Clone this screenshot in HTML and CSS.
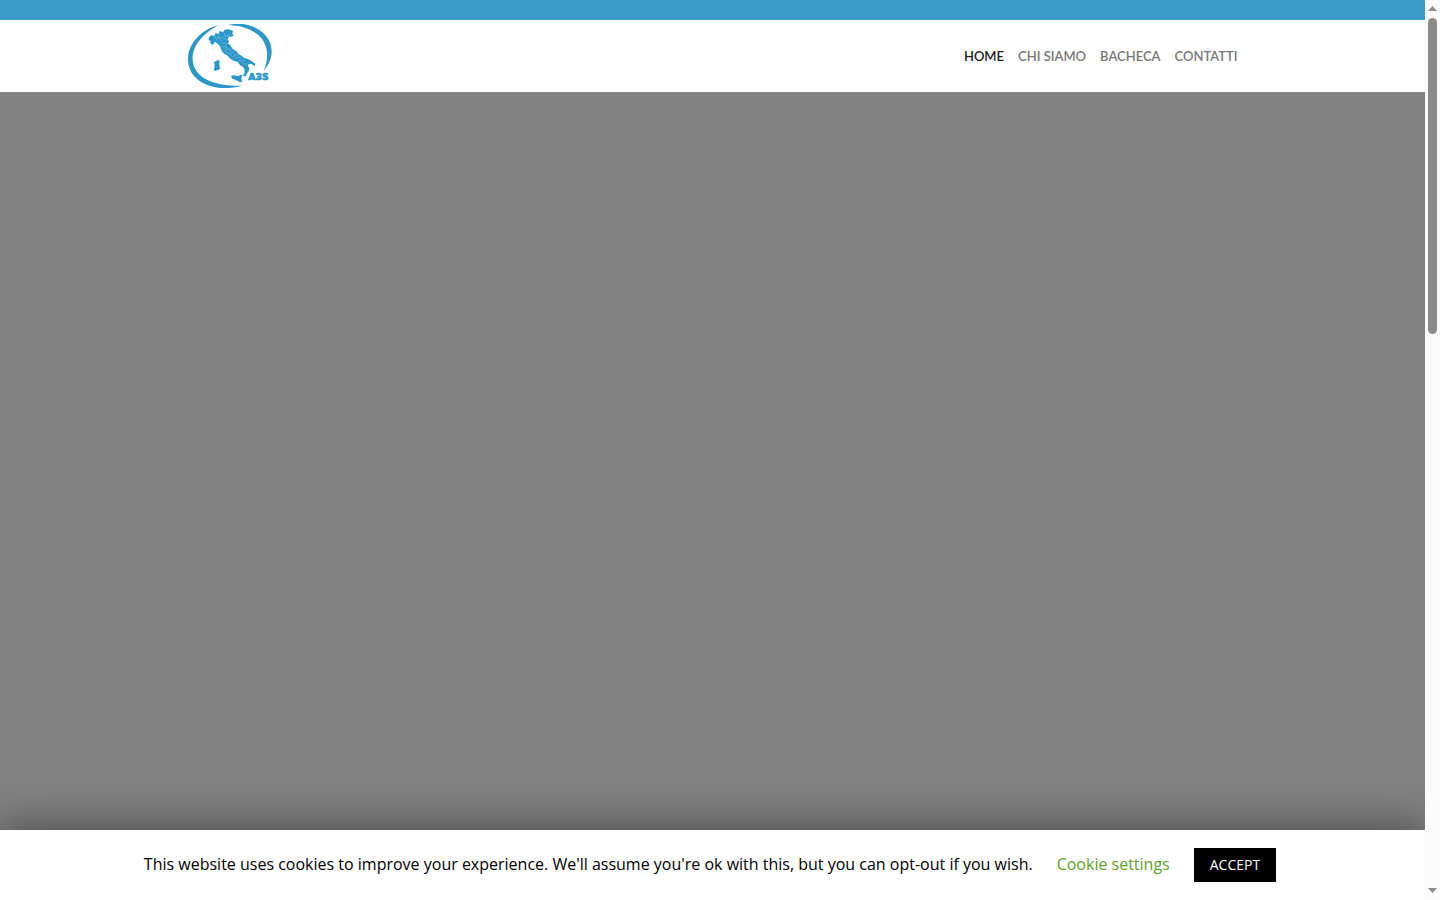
FILE: index.html
```html
<!DOCTYPE html>
<html lang="it">
<head>
<meta charset="utf-8">
<meta name="viewport" content="width=device-width, initial-scale=1">
<title>A3S</title>
<link rel="stylesheet" href="styles.css">
</head>
<body>
<div class="page">
  <div class="topbar"></div>
  <header class="header">
    <div class="header-inner">
      <a class="logo" href="#" aria-label="A3S">
        <svg width="84" height="64" viewBox="24 27 252 192" aria-hidden="true">
          <g fill="#2b96c8">
            <path d="M118 29C66 42 23 84 24 134C25 186 72 218 132 219C153 219 171 217 187 212C166 213 149 212 132 209C80 202 40 176 38 134C36 92 70 54 118 29Z"/>
            <path d="M143 30C206 14 275 51 275 109C275 131 266 150 251 167C259 148 263 130 261 111C257 60 205 31 143 30Z"/>
            <path d="M86 68L94 60L102 63L107 55L115 57L119 48L129 51L134 44L145 43L159 47L157 56L161 61L154 66L148 64L143 71L147 79L144 85L151 91L158 102L169 108L176 118L185 122L192 128L204 132L215 138L226 146L224 154L215 147L207 147L203 152L208 159L206 169L200 176L196 185L189 182L194 172L193 162L188 155L180 150L173 141L162 138L151 131L141 121L132 116L125 107L121 95L113 86L105 80L99 89L90 85L92 78L86 76Z"/>
            <path d="M102 140L109 139L113 134L119 138L118 149L120 158L117 165L111 164L108 169L101 165L104 153Z"/>
            <path d="M153 184L161 180L171 184L182 180L188 179L184 190L187 200L178 201L168 195L157 191Z"/>
            <text class="logo-text" x="205" y="195">A3S</text>
          </g>
          <g class="logo-borders">
            <path d="M105 62L110 76M118 55L115 68L124 78M111 69L130 67L143 76M130 52L137 65L149 57M124 82L137 88L144 84M127 95L139 95L146 104L156 107M137 96L136 110L149 116L160 111M149 118L158 126L166 118L174 120M164 135L171 127L183 128M175 137L188 138L195 133M188 140L193 148L203 146"/>
          </g>
        </svg>
      </a>
      <nav class="nav">
        <a class="nav-link nav-link-active" href="#">HOME</a>
        <a class="nav-link" href="#">CHI SIAMO</a>
        <a class="nav-link" href="#">BACHECA</a>
        <a class="nav-link" href="#">CONTATTI</a>
      </nav>
    </div>
  </header>
  <main class="hero"></main>
  <div class="cookie-bar">
    <span class="cookie-text">This website uses cookies to improve your experience. We'll assume you're ok with this, but you can opt-out if you wish.</span>
    <a class="cookie-settings" href="#">Cookie settings</a>
    <button class="cookie-accept" type="button">ACCEPT</button>
  </div>
</div>
<div class="scrollbar" aria-hidden="true">
  <svg class="scroll-arrow" width="9" height="5" viewBox="0 0 9 5"><path d="M0 5L4.500 0L9 5Z"/></svg>
  <div class="scroll-track"><div class="scroll-thumb"></div></div>
  <svg class="scroll-arrow" width="9" height="5" viewBox="0 0 9 5"><path d="M0 0L4.500 5L9 0Z"/></svg>
</div>
</body>
</html>
```

FILE: styles.css
```css
* {
  box-sizing: border-box;
}

body {
  display: flex;
  height: 100vh;
  margin: 0;
  font-family: "Open Sans", sans-serif;
}

.page {
  display: flex;
  flex: 1;
  flex-direction: column;
  min-width: 0;
  overflow: hidden;
}

.topbar {
  height: 20px;
  background: #3b9bc7;
}

.header {
  background: #fff;
}

.header-inner {
  display: flex;
  align-items: center;
  justify-content: space-between;
  max-width: 1080px;
  margin: 0 auto;
  padding: 4px 15px;
}

.logo,
.logo svg {
  display: block;
}

.logo-text {
  font: bold 28px "DejaVu Sans", sans-serif;
  stroke: #2b96c8;
  stroke-width: 2px;
}

.logo-borders {
  fill: none;
  stroke: #7cc0df;
  stroke-width: 2px;
}

.nav {
  display: flex;
  gap: 14px;
}

.nav-link {
  color: #777;
  font: 600 13px/20px Lato, sans-serif;
  text-decoration: none;
}

.nav-link-active {
  color: #222;
}

.hero {
  flex: 1;
  background: #828282;
}

.cookie-bar {
  display: flex;
  align-items: flex-start;
  justify-content: center;
  padding: 18px 25px 18px 20px;
  background: #fff;
  box-shadow: 0 -4px 40px 2px rgba(0, 0, 0, 0.4);
  color: #000;
  font-size: 16px;
  line-height: 32px;
}

.cookie-settings {
  margin: 0 24px;
  color: #61a229;
  text-decoration: none;
}

.cookie-accept {
  padding: 7px 16px;
  border: 0;
  background: #000;
  color: #fff;
  font: 14px/20px "Open Sans", sans-serif;
}

.scrollbar {
  display: flex;
  flex: none;
  flex-direction: column;
  align-items: center;
  width: 15px;
  padding: 6px 0 7px;
  background: #fcfcfc;
}

.scroll-arrow {
  flex: none;
  fill: #8b8b8b;
}

.scroll-track {
  flex: 1;
  width: 9px;
  padding: 7px 0;
}

.scroll-thumb {
  height: 36.6%;
  border-radius: 5px;
  background: #8b8b8b;
}
```
